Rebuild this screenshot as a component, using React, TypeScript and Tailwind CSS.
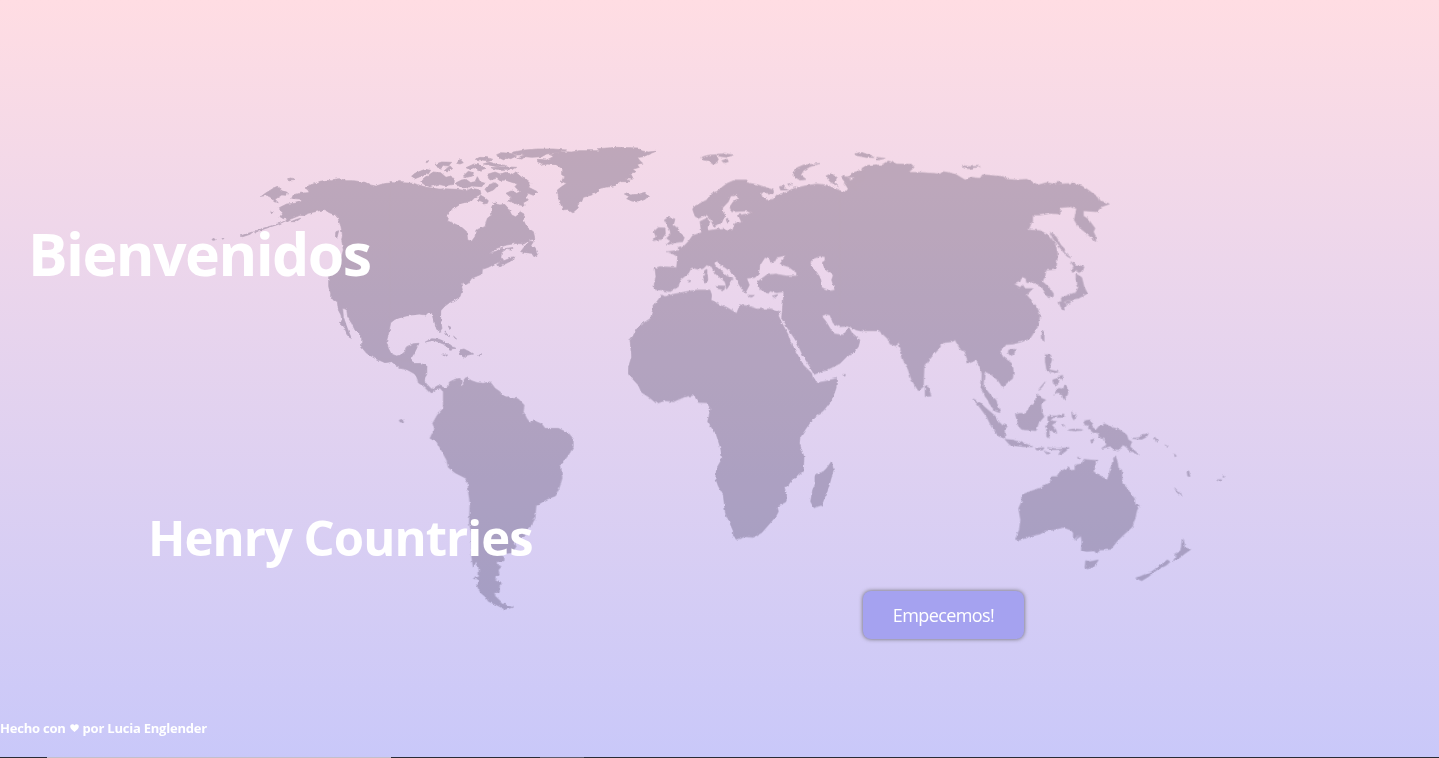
const NORTH_AMERICA_WEST =
  'M316 143L325 136 345 131 360 124 378 121 395 122 408 117 422 116 440 122 460 122 495 127 512 135 527 138 545 133 560 130 585 129 598 121 603 128 640 130 680 142 722 148 722 577 712 568 705 545 700 525 690 518 670 516 645 522 625 524 610 527 585 538 572 548 566 580 559 605 565 625 574 642 590 648 604 644 615 635 620 620 640 611 657 610 645 635 636 650 632 670 655 672 680 678 678 705 670 732 655 718 640 695 620 688 600 685 575 665 555 668 525 655 500 640 485 622 485 590 465 570 455 550 443 530 440 508 428 505 430 530 440 560 448 580 454 595 445 590 432 560 418 547 426 543 423 525 415 510 412 485 392 474 392 460 386 440 386 405 410 370 425 350 430 330 425 300 427 285 423 260 414 235 405 224 388 218 372 208 355 213 325 220 312 227 300 226 270 238 258 245 262 236 250 236 240 230 248 218 238 203 260 192 285 190 303 185 305 178 275 175 280 165 300 160 325 158 328 150Z';
const ALASKA_ISLANDS =
  'M196 160L212 150 225 142 235 138 242 150 262 157 260 166 245 165 225 178 235 188 222 185 212 172 200 166 184 169ZM262 117L272 114 284 118 270 120ZM120 288L135 283 160 275 150 283 128 290ZM163 273L195 263 240 250 265 238 235 253 195 266 170 276ZM272 245L290 238 302 235 288 245ZM36 298L42 295 46 300 38 301ZM408 275L416 272 411 293 406 290ZM66 295L72 295 68 298ZM212 217L222 216 218 221ZM325 214L345 209 354 208 330 218Z';
const NORTH_AMERICA_EAST =
  'M-30 128L0 130 30 132 60 143 85 150 110 150 130 146 170 148 200 152 215 145 240 150 243 162 225 172 215 182 185 190 165 203 150 212 138 228 145 233 143 243 165 252 185 262 200 275 203 300 215 304 225 290 228 270 255 260 262 235 275 225 275 200 287 192 300 195 314 193 325 205 335 225 350 232 360 215 372 222 370 240 376 253 385 265 400 275 405 297 390 300 372 312 350 310 320 315 290 325 266 341 290 333 302 326 322 325 305 337 303 350 312 362 330 355 343 357 325 367 296 381 290 374 310 362 285 371 265 382 247 388 246 402 215 415 205 430 195 435 190 427 183 435 187 448 180 470 150 487 135 498 122 512 120 530 126 565 120 573 110 568 105 550 103 530 95 518 85 517 77 525 60 522 35 525 0 533 -30 540Z';
const ARCTIC_ISLANDS =
  'M33 110L45 100 75 88 92 91 85 102 60 110 43 117ZM62 125L75 115 88 104 100 96 122 98 138 112 153 108 163 122 160 133 135 137 115 133 90 140 75 135ZM105 73L125 66 155 67 145 78 130 76 122 84 112 80ZM133 92L150 77 158 86 145 90 142 96ZM170 70L180 58 190 68 180 72ZM190 108L205 94 220 98 218 108 200 112ZM165 130L185 120 198 118 212 128 225 125 232 110 240 125 255 130 245 140 215 138 198 146 180 140ZM198 83L222 72 240 76 258 85 235 92 222 83 208 88ZM226 58L240 52 262 53 278 58 262 62 245 60ZM250 72L268 66 290 73 315 76 292 80ZM270 83L310 80 350 82 340 88 290 88ZM290 44L305 38 330 40 350 48 332 56 318 52 312 60 295 52ZM340 36L375 30 410 27 460 27 500 30 470 38 440 42 425 50 395 52 375 50 365 58 350 54 375 44 352 45 335 40ZM255 148L265 135 285 128 295 135 280 150 262 157ZM262 103L285 96 300 102 318 97 330 104 345 95 365 112 385 122 392 130 386 142 412 155 400 166 385 160 378 172 385 180 370 188 372 198 350 192 325 183 335 175 318 160 335 152 350 160 360 155 345 140 352 132 330 125 315 120 300 122 290 115 270 120ZM232 180L242 166 253 172 265 182 262 190 250 192 245 184ZM700 75L720 69 704 79ZM278 188L290 186 286 194ZM75 64L90 62 80 68Z';
const GREENLAND =
  'M413 58L440 60 460 50 452 44 480 35 515 36 540 32 600 32 592 26 650 22 715 24 722 32 745 36 768 34 748 42 730 50 713 52 718 60 728 70 710 72 718 82 698 88 708 95 692 100 700 118 675 116 690 125 665 125 640 138 600 145 590 158 575 165 550 172 545 185 532 192 535 203 518 218 502 208 490 210 477 180 472 150 485 140 500 130 480 124 498 112 485 104 485 85 470 75 440 72 422 76 430 70 413 66Z';
const ATLANTIC_ISLANDS =
  'M673 162L682 158 692 165 715 162 735 157 746 168 735 178 715 186 695 183 680 176 688 170ZM362 335L375 318 390 303 400 305 392 318 405 322 412 345 402 350 395 340 378 338ZM322 325L342 322 335 328ZM325 353L345 350 338 361ZM76 606L95 596 118 598 140 608 155 620 168 625 150 628 130 612 105 602 90 603ZM128 645L143 645 138 649ZM178 630L192 627 208 635 218 642 200 646 192 652 182 645ZM232 645L246 645 238 648ZM145 558L153 562 148 565ZM135 575L148 590 140 585ZM160 588L170 597 165 595Z';
const SOUTH_AMERICA =
  'M0 -5L50 5 75 25 110 45 115 68 130 78 150 98 163 97 165 86 180 84 190 95 190 145 172 165 158 190 164 205 150 235 170 245 185 272 200 300 205 322 225 338 258 355 264 368 266 400 270 430 268 490 275 520 275 590 280 622 288 603 297 625 297 650 283 655 297 660 290 675 302 698 318 712 325 724 350 735 375 748 397 742 370 732 345 708 342 698 358 697 358 680 366 668 345 658 347 648 358 645 355 630 363 620 350 615 350 605 372 602 372 592 360 582 395 578 408 560 402 540 420 535 435 528 430 515 450 502 465 475 468 437 500 418 527 407 537 385 546 355 542 315 565 285 580 260 580 238 566 220 535 205 495 205 485 192 462 182 450 188 440 175 430 155 432 135 415 117 400 112 378 114 360 95 345 85 330 65 310 70 292 68 275 62 258 52 250 62 250 78 241 78 245 68 240 55 225 58 208 66 208 75 197 85 175 76 155 88 140 72 130 60 140 42 140 18 122 10 100 12 92 0ZM58 180L68 178 71 187 60 186Z';
const EUROPE =
  'M135 385L150 380 200 383 203 350 190 342 172 335 205 332 205 322 222 318 235 305 248 287 275 278 270 245 290 235 300 245 292 262 295 272 340 265 352 272 368 270 375 250 395 247 385 225 410 222 430 218 410 213 365 215 360 200 370 185 385 175 380 165 362 168 355 185 338 203 338 215 345 225 335 248 312 262 302 238 290 224 265 235 255 228 248 208 252 200 290 180 305 160 320 155 335 143 352 130 375 120 410 120 410 128 445 135 465 142 490 150 490 160 455 158 453 165 470 180 490 178 500 165 530 157 550 145 590 137 620 132 650 135 680 148 705 158 716 148 708 130 695 113 700 105 725 120 735 112 720 102 755 90 765 80 800 75 800 572 740 570 718 558 690 560 670 550 660 525 648 522 635 528 648 545 665 573 675 582 700 585 717 563 725 578 750 600 745 620 730 640 710 650 690 670 660 685 612 703 600 680 578 645 560 605 550 590 530 560 515 535 522 455 500 458 480 453 475 460 450 447 443 425 470 405 495 402 530 408 560 408 560 398 535 380 510 372 520 358 528 346 498 352 496 362 483 368 478 355 465 352 450 375 445 402 435 412 410 415 418 435 405 460 388 435 372 403 345 382 330 375 320 360 312 370 320 382 350 405 370 418 360 420 358 435 350 447 345 425 315 400 305 380 290 375 280 385 265 388 245 382 235 400 210 420 205 440 180 455 155 450 132 448 133 430 138 410ZM600 370L612 355 630 348 645 350 645 362 636 368 648 390 670 405 665 420 675 450 660 453 635 443 632 415 615 390Z';
const EUROPE_ISLANDS =
  'M163 240L175 232 195 237 190 255 203 265 210 282 223 292 218 305 195 308 168 315 182 303 170 295 182 282 180 270 170 255ZM132 275L145 263 165 264 166 282 155 297 128 302 138 290ZM272 52L295 46 318 44 325 58 322 68 308 72 295 62 280 60ZM320 44L345 40 370 45 350 52 325 48ZM335 62L352 58 355 65 342 68ZM548 106L560 84 580 75 608 73 630 70 600 80 580 92 572 105 588 118 570 120ZM508 140L522 138 530 150 512 150ZM533 132L545 130 538 138ZM648 108L665 100 680 115 672 126 685 140 660 125ZM318 437L345 438 342 450 322 445ZM280 408L292 403 294 422 284 429ZM283 392L291 388 291 402 284 401ZM413 466L433 466 425 471ZM487 468L503 464 498 474ZM232 422L240 421 236 427ZM348 237L354 235 353 250ZM735 42L755 38 785 48 770 52 738 46Z';
const AFRICA =
  'M155 465L165 470 190 463 230 455 260 450 300 450 305 465 303 480 330 495 350 502 380 520 390 495 415 498 440 507 485 507 510 515 505 527 515 548 535 585 545 615 560 640 580 675 605 700 608 715 625 728 650 723 680 715 678 745 665 780 640 812 610 835 590 862 570 893 568 910 575 930 582 950 580 995 545 1020 535 1035 522 1040 530 1063 528 1085 502 1100 505 1115 497 1130 475 1155 455 1178 430 1192 405 1190 380 1198 370 1190 370 1173 358 1145 346 1118 340 1065 325 1038 317 1015 320 985 337 955 332 925 318 880 303 860 293 845 302 805 290 788 265 787 255 770 248 766 225 770 190 785 165 782 140 790 115 770 95 757 85 735 55 702 56 680 65 650 60 600 68 590 85 560 122 535 130 500ZM665 964L670 990 655 1045 635 1095 612 1103 602 1085 608 1050 615 1035 615 1005 640 995 650 985ZM698 704L706 703 705 709Z';
const ASIA =
  'M0 155L20 158 25 145 10 125 30 138 45 148 50 148 35 132 68 122 72 110 20 112 45 98 75 95 65 85 85 76 125 75 145 63 170 72 215 73 222 82 205 97 250 98 300 102 310 95 345 102 375 120 395 112 420 115 428 104 490 110 500 118 530 120 560 118 595 135 620 128 645 133 700 130 725 138 740 147 775 172 780 182 808 192 785 200 770 215 730 212 730 228 745 238 765 265 760 275 767 290 767 305 740 280 715 260 703 240 710 205 690 200 660 203 660 222 630 220 600 225 578 225 578 240 565 270 600 272 625 285 645 310 653 340 648 388 618 390 615 408 607 425 625 440 640 460 640 470 625 473 605 440 590 435 585 425 560 428 558 415 545 410 540 425 522 432 540 442 548 435 555 446 577 446 560 465 590 500 600 525 593 560 570 595 545 605 520 612 495 614 480 632 488 650 515 670 520 690 518 715 497 732 488 742 475 722 455 705 437 695 432 705 430 735 445 765 452 790 436 770 425 745 426 700 420 680 408 660 385 670 375 635 360 625 345 600 335 605 310 608 295 628 275 650 252 680 250 740 235 752 215 720 205 690 190 660 175 602 170 618 150 612 143 596 115 570 60 572 25 557 0 545Z';
const ASIA_ISLANDS =
  'M45 42L58 39 90 45 102 53 75 50ZM110 52L135 55 112 60ZM366 76L385 80 420 79 390 86 372 84ZM645 127L655 124 665 130 650 133ZM630 277L648 290 662 315 675 328 672 335 692 354 680 348 660 323 640 297ZM692 365L708 375 732 380 728 393 718 398 705 390 698 398 694 388 702 380ZM708 402L725 412 732 440 742 460 730 467 715 475 700 477 695 484 665 484 664 474 690 463 708 458 716 440 708 420ZM676 482L694 480 690 489 678 490ZM657 486L670 484 680 495 670 510 662 500ZM604 575L612 574 612 605 604 595ZM506 630L525 628 522 642 512 647 505 640ZM255 738L265 742 273 768 256 770ZM616 644L632 645 635 660 628 680 630 700 620 688 616 665Z';
const OCEANIA =
  'M98 236L120 248 135 262 165 288 180 310 202 318 193 330 195 355 175 348 155 320 140 290 112 252ZM122 200L135 205 150 223 168 240 180 278 165 273 148 250 142 225ZM195 358L215 360 245 367 278 380 250 380 210 375ZM286 385L312 383 308 390 290 390ZM313 393L328 400 320 402ZM322 383L345 386 388 383 375 395 356 404 365 388 335 389ZM226 283L240 280 255 282 270 260 285 245 292 222 305 235 317 240 303 250 305 275 312 290 295 310 288 332 265 330 245 328 235 318 232 300ZM323 290L335 288 350 288 372 282 370 292 340 292 330 302 350 305 335 315 348 330 350 340 335 332 328 328 327 355 320 350 320 325 316 320 325 308ZM395 275L400 285 408 280 402 300 397 292ZM385 330L405 327 428 330 405 333ZM365 311L375 318 368 316ZM430 303L450 300 458 307 455 320 468 330 478 318 495 312 510 320 540 330 560 345 565 360 575 365 570 380 598 405 575 395 555 378 548 375 535 393 518 388 512 378 485 385 500 375 495 360 478 350 474 338 460 338 445 325 448 315 435 315ZM452 360L463 357 455 370ZM575 355L598 353 610 343 625 340 620 350 605 358ZM642 350L652 360 650 367ZM675 375L685 381 680 380ZM703 402L709 408 705 410ZM741 453L746 453 750 470 743 468ZM703 503L715 515 726 528 712 518ZM830 480L845 479 838 484ZM848 470L856 467 852 472ZM412 412L422 414 416 417ZM328 150L355 155 340 160ZM338 180L352 175 358 185 347 195 340 190ZM352 170L368 166 366 178ZM342 222L355 205 370 207 375 195 385 210 382 225 372 238 365 222 352 217ZM296 208L318 183 305 202Z';
const AUSTRALIA =
  'M526 407L532 425 535 445 545 450 547 490 562 505 572 522 583 535 586 555 598 556 590 572 585 595 575 622 550 645 530 665 512 688 480 690 470 700 462 692 440 694 424 690 426 665 423 648 405 660 422 640 400 658 400 638 392 630 370 622 345 628 318 632 300 642 265 650 240 660 226 658 238 630 242 600 236 565 245 545 245 525 275 513 300 505 330 488 335 470 350 470 360 455 385 443 392 452 405 450 405 435 425 432 432 418 450 420 475 422 462 435 460 455 485 470 502 480 508 460 512 445 520 420ZM437 722L450 725 475 720 462 740 445 747 435 744ZM727 655L733 668 733 683 752 688 735 700 720 712 700 722 712 705 700 705 722 692ZM682 720L690 725 680 735 650 750 625 770 605 782 587 774 600 770 635 755Z';

const REGIONS = [
  { x: 200, y: 140, paths: [NORTH_AMERICA_WEST, ALASKA_ISLANDS] },
  { x: 400, y: 140, paths: [NORTH_AMERICA_EAST, ARCTIC_ISLANDS, GREENLAND, ATLANTIC_ISLANDS] },
  { x: 380, y: 360, paths: [SOUTH_AMERICA] },
  { x: 610, y: 140, paths: [EUROPE, EUROPE_ISLANDS, AFRICA] },
  { x: 840, y: 140, paths: [ASIA, ASIA_ISLANDS] },
  { x: 940, y: 320, paths: [OCEANIA, AUSTRALIA] },
];

function WorldMap() {
  return (
    <svg
      className="pointer-events-none absolute inset-0 h-[758px] w-[1439px]"
      viewBox="0 0 1439 758"
      aria-hidden="true"
    >
      {/* Roughens the coastlines slightly and softens their edges. */}
      <filter id="coast" x="0" y="0" width="1439" height="758" filterUnits="userSpaceOnUse">
        <feTurbulence type="fractalNoise" baseFrequency="0.25" numOctaves="2" seed="4" result="noise" />
        <feDisplacementMap in="SourceGraphic" in2="noise" scale="3" xChannelSelector="R" yChannelSelector="G" />
        <feGaussianBlur stdDeviation="0.5" />
      </filter>
      <g
        fill="#0b0020"
        fillRule="evenodd"
        stroke="#0b0020"
        strokeWidth="2"
        strokeLinejoin="round"
        opacity="0.23"
        filter="url(#coast)"
      >
        {REGIONS.map((region) => (
          <g key={`${region.x}-${region.y}`} transform={`translate(${region.x} ${region.y}) scale(0.33333)`}>
            {region.paths.map((d) => (
              <path key={d} d={d} />
            ))}
          </g>
        ))}
      </g>
    </svg>
  );
}

function Heart() {
  return (
    <svg className="mx-1 inline-block h-[8px] w-[9px] align-[1px]" viewBox="0 0 9 8" fill="currentColor">
      <path d="M4.5 8C2 6 .2 4.5.2 2.5.2 1 1.3.2 2.4.2c.9 0 1.700.5 2.100 1.200C4.900.7 5.700.2 6.600.2 7.700.2 8.800 1 8.800 2.500 8.800 4.500 7 6 4.500 8Z" />
    </svg>
  );
}

export default function App() {
  return (
    <div className="relative flex h-[758px] w-full flex-col overflow-hidden bg-linear-to-b from-[#ffdde3] to-[#c9c8f9] font-['Open_Sans','Noto_Sans',sans-serif] text-white">
      <WorldMap />
      <main className="relative flex flex-1 flex-col items-start">
        <h1 className="mt-[213px] ml-[28px] text-[59px] leading-[80px] font-bold tracking-[-1.55px] whitespace-nowrap">
          Bienvenidos
        </h1>
        <h2 className="mt-[211px] ml-[148px] text-[49px] leading-[66px] font-bold tracking-[-0.98px] whitespace-nowrap">
          Henry Countries
        </h2>
        <button className="mt-[21px] ml-[863px] h-[48px] w-[161px] rounded-[8px] bg-[#a5a2f0] text-[18px] leading-none tracking-[-0.6px] whitespace-nowrap shadow-[0_0_4px_#666]">
          Empecemos!
        </button>
      </main>
      <footer className="relative">
        <p className="mb-[20px] text-[13px] leading-[18px] font-bold tracking-[-0.22px] whitespace-nowrap">
          Hecho con
          <Heart />
          por Lucia Englender
        </p>
        <div className="flex h-px bg-[#292b36]">
          <span className="ml-[47px] w-[344px] bg-[#c2bfcc]" />
          <span className="ml-[149px] w-[44px] bg-[#5b5b6b]" />
        </div>
      </footer>
    </div>
  );
}
